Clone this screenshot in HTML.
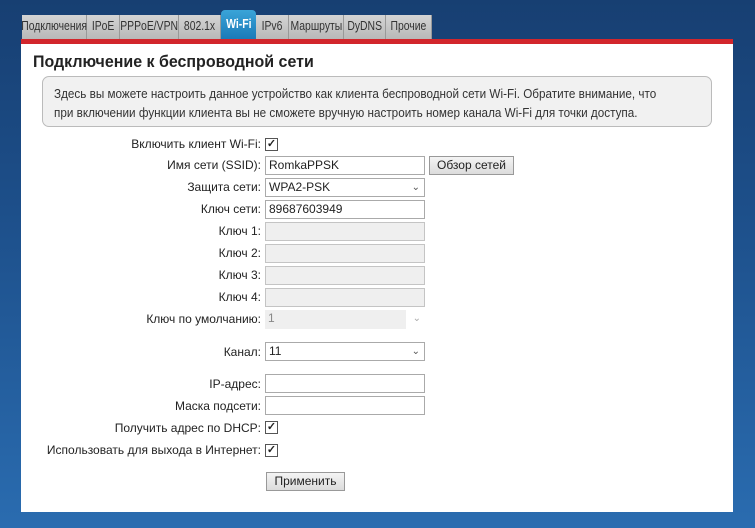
<!DOCTYPE html>
<html><head><meta charset="utf-8"><style>
*{box-sizing:border-box}
body{margin:0;width:755px;height:528px;overflow:hidden;background:linear-gradient(#173f72 0%,#1d4f8a 40%,#2a6cb0 100%);font-family:"Liberation Sans",sans-serif;font-size:12px;color:#222;position:relative}
.tab{position:absolute;top:15px;height:24px;background:linear-gradient(#d4d4d4,#b8b8b8);border-right:1px solid #999;color:#333;font-size:13px;line-height:22px;white-space:nowrap;display:flex;justify-content:center}
.tab span{display:inline-block;transform:scaleX(0.8);transform-origin:50% 50%;flex:none}
.tab.on{top:10px;height:29px;background:linear-gradient(#3aa4d8,#1a7ab8);color:#fff;line-height:28px;border-radius:4px 4px 0 0;border:none;font-weight:bold}
.red{position:absolute;left:21px;top:39px;width:712px;height:5px;background:#d2262c}
.panel{position:absolute;left:21px;top:44px;width:712px;height:468px;background:#fff}
h1{position:absolute;left:33px;top:52px;margin:0;font-size:17px;font-weight:bold;color:#222;white-space:nowrap;transform:scaleX(0.94);transform-origin:0 0}
.note{position:absolute;left:42px;top:76px;width:670px;height:51px;border:1px solid #bbb;border-radius:7px;background:#f1f1f1}
.nt{position:absolute;left:54px;top:84px;font-size:13px;line-height:19px;color:#333;white-space:nowrap;transform:scaleX(0.9);transform-origin:0 0}
.l{position:absolute;right:494px;font-size:12px;color:#222;white-space:nowrap}
.in{position:absolute;left:265px;width:160px;height:19px;border:1px solid #aaa;background:#fff;padding-left:3px;line-height:17px;font-size:12px}
.dis{background:#efefef;border-color:#c4c4c4}
.cb{position:absolute;left:265px;width:13px;height:13px;border:1px solid #555;font-size:11px;line-height:11px;text-align:center;font-weight:bold}
.arr{position:absolute;right:4px;top:0;font-size:10px;color:#555}
.btn{position:absolute;height:19px;border:1px solid #999;background:linear-gradient(#f4f4f4,#dcdcdc);text-align:center;line-height:17px;font-size:12px}
</style></head><body>
<div class="tab" style="left:22px;width:65px"><span>Подключения</span></div>
<div class="tab" style="left:87px;width:33px"><span>IPoE</span></div>
<div class="tab" style="left:120px;width:59px"><span>PPPoE/VPN</span></div>
<div class="tab" style="left:179px;width:42px"><span>802.1x</span></div>
<div class="tab on" style="left:221px;width:35px"><span>Wi-Fi</span></div>
<div class="tab" style="left:256px;width:33px"><span>IPv6</span></div>
<div class="tab" style="left:289px;width:55px"><span>Маршруты</span></div>
<div class="tab" style="left:344px;width:42px"><span>DyDNS</span></div>
<div class="tab" style="left:386px;width:46px"><span>Прочие</span></div>
<div class="red"></div>
<div class="panel"></div>
<h1>Подключение к беспроводной сети</h1>
<div class="note"></div>
<div class="nt">Здесь вы можете настроить данное устройство как клиента беспроводной сети Wi-Fi. Обратите внимание, что<br>при включении функции клиента вы не сможете вручную настроить номер канала Wi-Fi для точки доступа.</div>

<div class="l" style="top:137px">Включить клиент Wi-Fi:</div><div class="cb" style="top:138px">✓</div>
<div class="l" style="top:158px">Имя сети (SSID):</div><div class="in" style="top:156px">RomkaPPSK</div>
<div class="btn" style="left:429px;top:156px;width:85px">Обзор сетей</div>
<div class="l" style="top:180px">Защита сети:</div><div class="in" style="top:178px">WPA2-PSK<span class="arr">⌄</span></div>
<div class="l" style="top:202px">Ключ сети:</div><div class="in" style="top:200px">89687603949</div>
<div class="l" style="top:224px">Ключ 1:</div><div class="in dis" style="top:222px"></div>
<div class="l" style="top:246px">Ключ 2:</div><div class="in dis" style="top:244px"></div>
<div class="l" style="top:268px">Ключ 3:</div><div class="in dis" style="top:266px"></div>
<div class="l" style="top:290px">Ключ 4:</div><div class="in dis" style="top:288px"></div>
<div class="l" style="top:312px">Ключ по умолчанию:</div><div class="in" style="top:310px;border:none;background:linear-gradient(90deg,#efefef 88%,#fff 88%);color:#888">1<span class="arr" style="color:#aaa">⌄</span></div>
<div class="l" style="top:345px">Канал:</div><div class="in" style="top:342px">11<span class="arr">⌄</span></div>
<div class="l" style="top:377px">IP-адрес:</div><div class="in" style="top:374px"></div>
<div class="l" style="top:399px">Маска подсети:</div><div class="in" style="top:396px"></div>
<div class="l" style="top:421px">Получить адрес по DHCP:</div><div class="cb" style="top:421px">✓</div>
<div class="l" style="top:443px">Использовать для выхода в Интернет:</div><div class="cb" style="top:444px">✓</div>
<div class="btn" style="left:266px;top:472px;width:79px">Применить</div>
</body></html>
